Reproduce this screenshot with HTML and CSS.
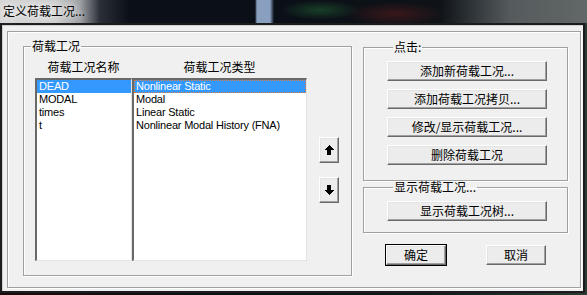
FILE: index.html
```html
<!DOCTYPE html>
<html lang="zh-CN">
<head>
    <meta charset="UTF-8">
    <title>定义荷载工况</title>
    <link rel="stylesheet" href="styles.css">
</head>
<body>

    <!-- Title bar -->
    <div class="titlebar">
        <span class="title">定义荷载工况...</span>
    </div>

    <!-- Dialog -->
    <div class="window">
        <div class="frame">

            <fieldset class="group cases">
                <legend>荷载工况</legend>
                <div class="cases-body">
                    <div class="lists">
                        <div class="list-col col-name">
                            <div class="col-head">荷载工况名称</div>
                            <ul class="listbox">
                                <li class="selected">DEAD</li>
                                <li>MODAL</li>
                                <li>times</li>
                                <li>t</li>
                            </ul>
                        </div>
                        <div class="list-col col-type">
                            <div class="col-head">荷载工况类型</div>
                            <ul class="listbox">
                                <li class="selected focus">Nonlinear Static</li>
                                <li>Modal</li>
                                <li>Linear Static</li>
                                <li>Nonlinear Modal History (FNA)</li>
                            </ul>
                        </div>
                    </div>
                    <div class="arrows">
                        <button class="btn arrow-btn">
                            <svg width="10" height="10" viewBox="0 0 10 10" shape-rendering="crispEdges"><polygon points="5,0 10,5 7,5 7,10 3,10 3,5 0,5" fill="#000"/></svg>
                        </button>
                        <button class="btn arrow-btn">
                            <svg width="10" height="10" viewBox="0 0 10 10" shape-rendering="crispEdges"><polygon points="5,10 10,5 7,5 7,0 3,0 3,5 0,5" fill="#000"/></svg>
                        </button>
                    </div>
                </div>
            </fieldset>

            <div class="side">
                <fieldset class="group click">
                    <legend>点击:</legend>
                    <div class="btn-stack">
                        <button class="btn wide">添加新荷载工况...</button>
                        <button class="btn wide">添加荷载工况拷贝...</button>
                        <button class="btn wide">修改/显示荷载工况...</button>
                        <button class="btn wide">删除荷载工况</button>
                    </div>
                </fieldset>

                <fieldset class="group show">
                    <legend>显示荷载工况...</legend>
                    <div class="btn-stack">
                        <button class="btn wide">显示荷载工况树...</button>
                    </div>
                </fieldset>

                <div class="dialog-btns">
                    <button class="btn small default">确定</button>
                    <button class="btn small">取消</button>
                </div>
            </div>

        </div>
    </div>

</body>
</html>
```

FILE: styles.css
```css
body {
    margin: 0;
    width: 587px;
    height: 295px;
    overflow: hidden;
    background: linear-gradient(to right, #1a0c10, #0c1014 40%, #10161a 70%, #2a3a34);
    font-family: "Noto Sans CJK SC", sans-serif;
    font-size: 12px;
    color: #000;
}

/* Title bar */
.titlebar {
    height: 23px;
    padding-left: 3px;
    box-sizing: border-box;
    background:
        linear-gradient(to right,
            transparent 0, transparent 255px,
            rgba(150, 175, 210, 0.9) 257px, rgba(150, 175, 210, 0.9) 270px,
            transparent 274px),
        radial-gradient(ellipse 40px 10px at 320px 10px, rgba(40, 120, 60, 0.45), transparent),
        radial-gradient(ellipse 50px 12px at 395px 14px, rgba(110, 30, 30, 0.45), transparent),
        linear-gradient(to right,
            #d6d6d6 0, #cdcdcd 55px, #9da0a4 80px, #2a2f37 100px,
            #0b0f17 130px, #0b0f17 300px, #0f1318 440px,
            #2c3236 470px, #555a5c 510px, #626868 587px);
    line-height: 22px;
    white-space: nowrap;
}

.title {
    color: #000;
    text-shadow: 0 0 6px #fff, 0 0 10px #fff;
}

/* Window */
.window {
    width: 585px;
    height: 270px;
    box-sizing: border-box;
    border: 2px solid #1c1c1c;
    box-shadow: inset 1px 1px 0 #cfcfcf;
    background: #f0f0f0;
    padding: 6px 2px 2px 5px;
}

.frame {
    height: 257px;
    box-sizing: border-box;
    border: 1px solid #a0a0a0;
    box-shadow: inset 1px 1px 0 #fff, 1px 1px 0 #fff;
    display: flex;
    align-items: flex-start;
    padding: 0 12px 0 15px;
}

/* Group boxes */
.group {
    margin: 0;
    padding: 0;
    min-width: 0;
    border: 1px solid #a0a0a0;
    box-shadow: inset 1px 1px 0 #fff, 1px 1px 0 #fff;
}

.group legend {
    margin-left: 6px;
    padding: 0 1px;
    line-height: 12px;
}

.cases {
    width: 329px;
    margin-top: 8px;
    padding: 8px 12px 14px 11px;
    box-sizing: border-box;
}

.cases legend {
    margin-left: -4px;
}

.cases-body {
    display: flex;
}

.lists {
    display: flex;
}

.col-head {
    height: 14px;
    line-height: 14px;
    margin-bottom: 4px;
    text-align: center;
    white-space: nowrap;
}

.col-name {
    width: 97px;
}

.col-type {
    width: 175px;
}

.listbox {
    list-style: none;
    margin: 0;
    padding: 0;
    height: 183px;
    box-sizing: border-box;
    background: #fff;
    border-style: solid;
    border-width: 2px 1px 1px 2px;
    border-color: #696969 #e3e3e3 #e3e3e3 #696969;
    font-family: "Liberation Sans", Arial, sans-serif;
    font-size: 11px;
    letter-spacing: -0.2px;
}

.listbox li {
    height: 13px;
    line-height: 13px;
    padding-left: 2px;
    white-space: nowrap;
}

.listbox li.selected {
    background: #3399ff;
    color: #fff;
}

.listbox li.focus {
    outline: 1px dotted #e07a3c;
    outline-offset: -1px;
}

.arrows {
    margin-left: 12px;
    padding-top: 77px;
    display: flex;
    flex-direction: column;
    gap: 14px;
}

/* Buttons */
.btn {
    margin: 0;
    padding: 0;
    font-family: "Noto Sans CJK SC", sans-serif;
    font-size: 12px;
    color: #000;
    background: #ececec;
    border: 1px solid;
    border-color: #fff #696969 #696969 #fff;
    box-shadow: inset -1px -1px 0 #a0a0a0, inset 1px 1px 0 #e3e3e3;
    box-sizing: border-box;
    line-height: 16px;
    cursor: pointer;
}

.arrow-btn {
    width: 20px;
    height: 26px;
    display: flex;
    align-items: center;
    justify-content: center;
    padding-right: 1px;
}

.arrow-btn svg {
    display: block;
}

.side {
    width: 205px;
    margin-left: 11px;
    display: flex;
    flex-direction: column;
}

.click {
    margin-top: 9px;
    padding: 8px 0 15px 23px;
}

.show {
    padding: 8px 0 11px 23px;
}

.btn-stack {
    display: flex;
    flex-direction: column;
    gap: 8px;
}

.wide {
    width: 160px;
    height: 20px;
}

.dialog-btns {
    display: flex;
    gap: 40px;
    margin-top: 12px;
    padding-left: 23px;
}

.small {
    width: 60px;
    height: 20px;
}

.default {
    outline: 1px solid #000;
    outline-offset: 0;
}
```
